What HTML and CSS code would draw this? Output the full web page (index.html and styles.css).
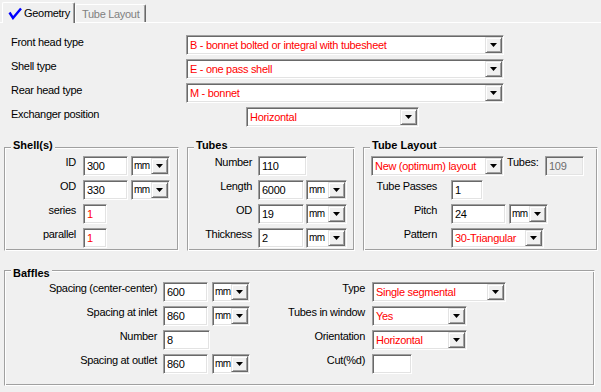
FILE: index.html
```html
<!DOCTYPE html>
<html lang="en">

<head>
    <meta charset="UTF-8">
    <meta name="viewport" content="width=device-width, initial-scale=1.0">
    <title>Geometry</title>
    <link rel="stylesheet" href="styles.css">
</head>

<body>

    <div class="tabs">
        <div class="tab active">
            <svg class="check" width="14" height="13" viewBox="0 0 14 13">
                <polyline points="1.5,5.5 5,11 13,1.5" fill="none" stroke="#0000ff" stroke-width="2.4" />
            </svg>
            Geometry
        </div>
        <div class="tab">Tube Layout</div>
    </div>

    <div class="panel">
        <div class="head">
            <label>Front head type</label>
            <div class="combo span"><span class="val red">B - bonnet bolted or integral with tubesheet</span><span class="drop"></span></div>
            <label>Shell type</label>
            <div class="combo span"><span class="val red">E - one pass shell</span><span class="drop"></span></div>
            <label>Rear head type</label>
            <div class="combo span"><span class="val red">M - bonnet</span><span class="drop"></span></div>
            <label>Exchanger position</label>
            <div class="combo position"><span class="val red">Horizontal</span><span class="drop"></span></div>
        </div>

        <div class="groups">
            <div class="group shell">
                <div class="title">Shell(s)</div>
                <div class="grid shell-grid">
                    <label>ID</label>
                    <input class="field w45" type="text" value="300">
                    <div class="combo unit w39"><span class="val">mm</span><span class="drop"></span></div>
                    <label>OD</label>
                    <input class="field w45" type="text" value="330">
                    <div class="combo unit w39"><span class="val">mm</span><span class="drop"></span></div>
                    <label>series</label>
                    <input class="field w24 red" type="text" value="1">
                    <span></span>
                    <label>parallel</label>
                    <input class="field w24 red" type="text" value="1">
                </div>
            </div>

            <div class="group tubes">
                <div class="title">Tubes</div>
                <div class="grid tubes-grid">
                    <label>Number</label>
                    <input class="field w49" type="text" value="110">
                    <span></span>
                    <label>Length</label>
                    <input class="field w46" type="text" value="6000">
                    <div class="combo unit w41"><span class="val">mm</span><span class="drop"></span></div>
                    <label>OD</label>
                    <input class="field w46" type="text" value="19">
                    <div class="combo unit w41"><span class="val">mm</span><span class="drop"></span></div>
                    <label>Thickness</label>
                    <input class="field w46" type="text" value="2">
                    <div class="combo unit w41"><span class="val">mm</span><span class="drop"></span></div>
                </div>
            </div>

            <div class="group layout">
                <div class="title">Tube Layout</div>
                <div class="layout-top">
                    <div class="combo w133"><span class="val red">New (optimum) layout</span><span class="drop"></span></div>
                    <label class="tubes-label">Tubes:</label>
                    <input class="field w39" type="text" value="109" disabled>
                </div>
                <div class="grid layout-grid">
                    <label>Tube Passes</label>
                    <input class="field w32" type="text" value="1">
                    <span></span>
                    <label>Pitch</label>
                    <input class="field w55" type="text" value="24">
                    <div class="combo unit w39"><span class="val">mm</span><span class="drop"></span></div>
                    <label>Pattern</label>
                    <div class="combo pattern"><span class="val red">30-Triangular</span><span class="drop"></span></div>
                </div>
            </div>
        </div>

        <div class="group baffles">
            <div class="title">Baffles</div>
            <div class="baffle-cols">
                <div class="grid baffle-left">
                    <label>Spacing (center-center)</label>
                    <input class="field w45" type="text" value="600">
                    <div class="combo unit w38"><span class="val">mm</span><span class="drop"></span></div>
                    <label>Spacing at inlet</label>
                    <input class="field w45" type="text" value="860">
                    <div class="combo unit w38"><span class="val">mm</span><span class="drop"></span></div>
                    <label>Number</label>
                    <input class="field w47" type="text" value="8">
                    <span></span>
                    <label>Spacing at outlet</label>
                    <input class="field w45" type="text" value="860">
                    <div class="combo unit w38"><span class="val">mm</span><span class="drop"></span></div>
                </div>
                <div class="grid baffle-right">
                    <label>Type</label>
                    <div class="combo w134"><span class="val red">Single segmental</span><span class="drop"></span></div>
                    <label>Tubes in window</label>
                    <div class="combo w95"><span class="val red">Yes</span><span class="drop"></span></div>
                    <label>Orientation</label>
                    <div class="combo w95"><span class="val red">Horizontal</span><span class="drop"></span></div>
                    <label>Cut(%d)</label>
                    <input class="field w40" type="text" value="">
                </div>
            </div>
        </div>
    </div>

</body>

</html>
```

FILE: styles.css
```css
body {
    margin: 0;
    width: 601px;
    height: 392px;
    overflow: hidden;
    background-color: #f0f0f0;
    color: #000;
    font-family: 'Liberation Sans', Arial, sans-serif;
    font-size: 11px;
    letter-spacing: -0.3px;
}

label {
    font-weight: normal;
}

/* tab strip */

.tabs {
    display: flex;
    align-items: flex-end;
    height: 22px;
    padding-left: 2px;
    border-bottom: 1px solid #fff;
}

.tab {
    box-sizing: border-box;
    display: flex;
    align-items: center;
    width: 71px;
    height: 18px;
    padding-left: 6px;
    color: #808080;
    border-top: 1px solid #fff;
    border-left: 1px solid #fff;
    border-right: 1px solid #696969;
    border-radius: 2px 2px 0 0;
    box-shadow: inset -1px 0 #a0a0a0;
}

.tab.active {
    width: 73px;
    height: 21px;
    margin-bottom: -1px;
    padding-left: 5px;
    gap: 2px;
    color: #000;
    background-color: #f0f0f0;
}

.panel {
    padding-top: 12px;
}

/* top selectors */

.head {
    display: grid;
    grid-template-columns: 175px 60px 258px;
    grid-auto-rows: 20px;
    row-gap: 4px;
    padding-left: 11px;
}

.head label {
    grid-column: 1;
    line-height: 14px;
}

.head .span {
    grid-column: 2 / 4;
}

.head .position {
    grid-column: 3;
    width: 173px;
}

/* group boxes */

.groups {
    display: flex;
    gap: 8px;
    margin-top: 20px;
    padding-left: 4px;
}

.group {
    box-sizing: border-box;
    height: 104px;
    border: 1px solid;
    border-color: #a0a0a0 #fff #fff #a0a0a0;
    box-shadow: inset 1px 1px #fff, inset -1px -1px #a0a0a0;
}

.shell {
    width: 175px;
}

.tubes {
    width: 168px;
}

.layout {
    width: 235px;
}

.title {
    width: fit-content;
    margin: -9px 0 4px 6px;
    padding: 0 2px;
    background-color: #f0f0f0;
    font-weight: bold;
    line-height: 13px;
    letter-spacing: 0;
}

.grid {
    display: grid;
    grid-auto-rows: 20px;
    row-gap: 4px;
    align-items: start;
}

.grid label {
    text-align: right;
    line-height: 13px;
    white-space: nowrap;
}

.shell-grid {
    grid-template-columns: 78px 46px 41px;
}

.shell-grid label {
    padding-right: 7px;
}

.tubes-grid {
    grid-template-columns: 70px 48px 41px;
}

.tubes-grid label {
    padding-right: 6px;
}

.layout-top {
    display: flex;
    align-items: flex-start;
    height: 20px;
    margin-bottom: 4px;
    padding-left: 7px;
}

.tubes-label {
    width: 38px;
    padding-left: 3px;
    line-height: 13px;
}

.layout-grid {
    grid-template-columns: 87px 57px 40px;
}

.layout-grid label {
    padding-right: 14px;
}

.layout-grid .pattern {
    grid-column: 2 / 4;
    width: 93px;
}

/* baffles */

.baffles {
    width: 591px;
    height: 116px;
    margin: 19px 0 0 4px;
}

.baffles .title {
    margin-top: -4px;
    margin-bottom: 2px;
}

.baffle-cols {
    display: flex;
}

.baffle-left {
    grid-template-columns: 158px 47px 40px;
}

.baffle-left label {
    padding-right: 6px;
}

.baffle-right {
    grid-template-columns: 122px auto;
    justify-items: start;
}

.baffle-right label {
    justify-self: stretch;
    padding-right: 7px;
}

/* fields and combos */

.field {
    box-sizing: border-box;
    height: 20px;
    margin: 0;
    padding: 0 0 0 3px;
    border: 1px solid;
    border-color: #a0a0a0 #fff #fff #a0a0a0;
    box-shadow: inset 1px 1px #696969, inset -1px -1px #e3e3e3;
    background-color: #fff;
    color: #000;
    font: inherit;
    letter-spacing: inherit;
    outline: none;
}

.field.red {
    color: #ff0000;
}

.field:disabled {
    background-color: #f0f0f0;
    color: #6d6d6d;
}

.combo {
    box-sizing: border-box;
    display: flex;
    height: 20px;
    padding: 1px;
    border: 1px solid;
    border-color: #a0a0a0 #fff #fff #a0a0a0;
    box-shadow: inset 1px 1px #696969, inset -1px -1px #e3e3e3;
    background-color: #fff;
}

.val {
    flex: 1;
    padding-left: 2px;
    line-height: 16px;
    white-space: nowrap;
    overflow: hidden;
}

.unit .val {
    padding-left: 1px;
    font-size: 10px;
    letter-spacing: -0.6px;
}

.drop {
    box-sizing: border-box;
    display: flex;
    align-items: center;
    justify-content: center;
    flex: none;
    width: 17px;
    height: 16px;
    border: 1px solid;
    border-color: #e3e3e3 #696969 #696969 #e3e3e3;
    box-shadow: inset 1px 1px #fff, inset -1px -1px #a0a0a0;
    background-color: #f0f0f0;
}

.drop::after {
    content: "";
    width: 7px;
    height: 4px;
    background-color: #000;
    clip-path: polygon(0 0, 100% 0, 50% 100%);
}

.red {
    color: #ff0000;
}

.unit {
    justify-self: end;
}

.w24 { width: 24px; }
.w32 { width: 32px; }
.w38 { width: 38px; }
.w39 { width: 39px; }
.w40 { width: 40px; }
.w41 { width: 41px; }
.w45 { width: 45px; }
.w46 { width: 46px; }
.w47 { width: 47px; }
.w49 { width: 49px; }
.w55 { width: 55px; }
.w95 { width: 95px; }
.w133 { width: 133px; }
.w134 { width: 134px; }
```
